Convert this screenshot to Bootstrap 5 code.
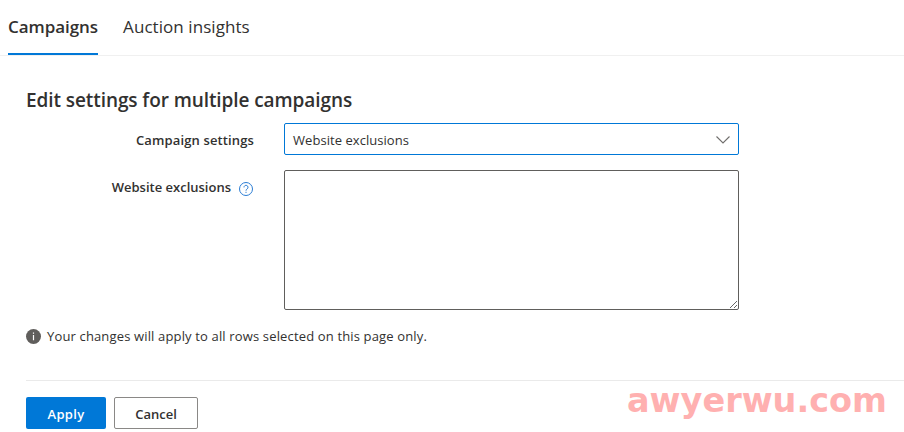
<!DOCTYPE html>
<html lang="en">
<head>
<meta charset="utf-8">
<meta name="viewport" content="width=device-width, initial-scale=1">
<title>Edit settings for multiple campaigns</title>
<link href="https://cdn.jsdelivr.net/npm/bootstrap@5.3.0/dist/css/bootstrap.min.css" rel="stylesheet">
<style>
body{font-family:"Open Sans","Noto Sans",sans-serif;font-size:13px;line-height:20px;color:#323130;height:432px;overflow:hidden}
.tabs{height:56px;border-bottom:1px solid #f0f0f0;gap:25px;padding-left:8px}
.tabs .nav-link{height:55px;padding:14px 0 0;font-size:17px;line-height:26px;color:#323130;border-radius:0}
.tabs .nav-link.active{font-weight:600;border-bottom:2px solid #0078d7;letter-spacing:-.05px}
.tabs .plain{letter-spacing:.06px}
.editor{padding:31px 0 0 26px}
.title{font-size:19px;line-height:26px;font-weight:600;letter-spacing:-.08px;margin-bottom:10px}
.setting{margin-bottom:15px}
.caption{width:228px;margin-right:30px;font-weight:600}
.caption .wide{letter-spacing:.13px}
.setting .caption{padding-top:2px}
.picker{width:455px;height:32px;border:1px solid #0078d7;border-radius:2px;padding:0 8px;font-size:13px;color:#323130;background:#fff;letter-spacing:.05px}
.picker span{padding-top:2px}
.picker svg{margin-top:2px}
.sites-caption{padding:7px 1px 0 0}
.help-mark{margin:5px 0 0 8px}
.sites{width:455px;height:140px;border:1px solid #605e5c;border-radius:2px;resize:both}
.note{margin-top:16px;letter-spacing:.15px;gap:6px}
.actions{margin-top:34px;border-top:1px solid #eaeaea;padding-top:16px;gap:8px}
.actions .btn{height:32px;border-radius:2px;padding:2px 0 0;font-size:13px;font-weight:600;line-height:30px}
.actions .apply{width:80px;background:#0078d7;color:#fff;border:0;letter-spacing:.3px}
.actions .cancel{width:84px;border:1px solid #8a8886;color:#323130;background:#fff}
.watermark{left:620px;top:380px}
</style>
</head>
<body class="bg-white position-relative">
<nav class="nav tabs">
  <a class="nav-link active" href="#">Campaigns</a>
  <a class="nav-link plain" href="#">Auction insights</a>
</nav>
<main class="editor">
  <h1 class="title">Edit settings for multiple campaigns</h1>
  <div class="setting d-flex align-items-center">
    <div class="caption text-end"><span class="wide">Campaign settings</span></div>
    <button class="picker d-flex align-items-center justify-content-between" type="button">
      <span>Website exclusions</span>
      <svg width="14" height="8" viewBox="0 0 14 8" fill="none" stroke="#706e6c" stroke-width="1.1"><path d="M.5.5 7 7 13.5.5"/></svg>
    </button>
  </div>
  <div class="d-flex align-items-start">
    <div class="caption sites-caption d-flex justify-content-end">
      <span>Website exclusions</span>
      <svg class="help-mark" width="14" height="14" viewBox="0 0 14 14" fill="none" stroke="#2b7cd3"><circle cx="7" cy="7" r="6.5"/><path d="M5 5.4a2 2 0 1 1 3.2 1.5C7.4 7.4 7 7.8 7 8.7M7 9.8v1.1"/></svg>
    </div>
    <textarea class="sites" aria-label="Website exclusions"></textarea>
  </div>
  <div class="note d-flex align-items-center">
    <svg width="15" height="15" viewBox="0 0 15 15"><circle cx="7.5" cy="7.5" r="7.5" fill="#605e5c"/><path d="M7.5 3.5v1.3M7.5 6v5.2" stroke="#fff" stroke-width="1.2"/></svg>
    <span>Your changes will apply to all rows selected on this page only.</span>
  </div>
  <div class="actions d-flex">
    <button class="btn apply d-flex align-items-center justify-content-center" type="button">Apply</button>
    <button class="btn cancel d-flex align-items-center justify-content-center" type="button">Cancel</button>
  </div>
</main>
<svg class="watermark position-absolute" width="284" height="44" viewBox="0 0 284 44">
  <text x="7" y="32" textLength="260" lengthAdjust="spacingAndGlyphs" font-family="DejaVu Sans, sans-serif" font-weight="700" font-size="34" fill="#ffb0b0">awyerwu.com</text>
</svg>
<script src="https://cdn.jsdelivr.net/npm/bootstrap@5.3.0/dist/js/bootstrap.bundle.min.js"></script>
</body>
</html>
